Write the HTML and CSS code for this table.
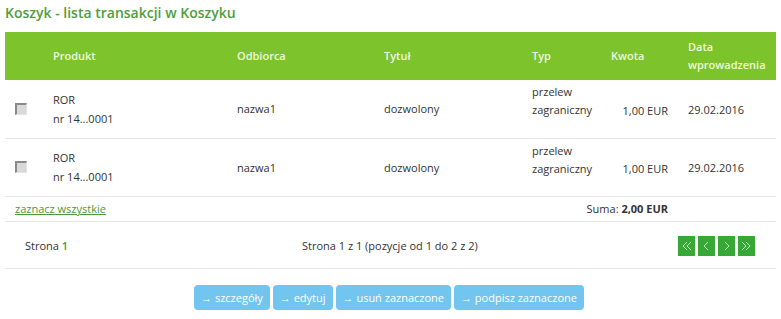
FILE: index.html
```html
<!DOCTYPE html>
<html lang="pl">
<head>
<meta charset="utf-8">
<title>Koszyk</title>
<link rel="stylesheet" href="styles.css">
</head>
<body>
<div class="page">
  <h1 class="title">Koszyk - lista transakcji w Koszyku</h1>

  <table class="grid">
    <colgroup>
      <col class="c-check"><col class="c-prod"><col class="c-odb"><col class="c-tyt"><col class="c-typ"><col class="c-kw"><col class="c-data">
    </colgroup>
    <thead>
      <tr>
        <th></th>
        <th>Produkt</th>
        <th>Odbiorca</th>
        <th>Tytuł</th>
        <th>Typ</th>
        <th>Kwota</th>
        <th>Data wprowadzenia</th>
      </tr>
    </thead>
    <tbody>
      <tr class="item">
        <td class="check"><span class="box"></span></td>
        <td>ROR<br>nr 14...0001</td>
        <td>nazwa1</td>
        <td>dozwolony</td>
        <td class="typ">przelew<br>zagraniczny</td>
        <td class="amount">1,00 EUR</td>
        <td class="date">29.02.2016</td>
      </tr>
      <tr class="item">
        <td class="check"><span class="box"></span></td>
        <td>ROR<br>nr 14...0001</td>
        <td>nazwa1</td>
        <td>dozwolony</td>
        <td class="typ">przelew<br>zagraniczny</td>
        <td class="amount">1,00 EUR</td>
        <td class="date">29.02.2016</td>
      </tr>
      <tr class="summary">
        <td colspan="4"><a href="#" class="select-all">zaznacz wszystkie</a></td>
        <td colspan="2" class="sum">Suma: <b>2,00 EUR</b></td>
        <td></td>
      </tr>
    </tbody>
  </table>

  <div class="pager">
    <div class="pager-page">Strona <span class="cur">1</span></div>
    <div class="pager-info">Strona 1 z 1 (pozycje od 1 do 2 z 2)</div>
    <div class="pager-nav">
      <a href="#" class="pg"><svg viewBox="0 0 17 20" width="17" height="20"><polyline points="9,6 5,10 9,14"/><polyline points="13,6 9,10 13,14"/></svg></a>
      <a href="#" class="pg"><svg viewBox="0 0 17 20" width="17" height="20"><polyline points="10,6 6,10 10,14"/></svg></a>
      <a href="#" class="pg"><svg viewBox="0 0 17 20" width="17" height="20"><polyline points="7,6 11,10 7,14"/></svg></a>
      <a href="#" class="pg"><svg viewBox="0 0 17 20" width="17" height="20"><polyline points="4,6 8,10 4,14"/><polyline points="8,6 12,10 8,14"/></svg></a>
    </div>
  </div>

  <div class="actions">
    <button class="btn">→ szczegóły</button>
    <button class="btn">→ edytuj</button>
    <button class="btn">→ usuń zaznaczone</button>
    <button class="btn">→ podpisz zaznaczone</button>
  </div>
</div>
</body>
</html>
```
FILE: styles.css
```css
* { box-sizing: border-box; }

body {
  margin: 0;
  background: #fff;
  font-family: "Open Sans", "Noto Sans", sans-serif;
  font-size: 11px;
  color: #333;
}

.page {
  padding: 0 5px;
}

.title {
  margin: 0;
  height: 32px;
  padding-top: 3px;
  font-size: 14px;
  font-weight: 600;
  color: #4f9e3c;
  line-height: 20px;
}

.grid {
  width: 771px;
  border-collapse: collapse;
  table-layout: fixed;
}

.c-check { width: 43px; }
.c-prod { width: 184px; }
.c-odb { width: 147px; }
.c-tyt { width: 148px; }
.c-typ { width: 79px; }
.c-kw { width: 77px; }
.c-data { width: 93px; }

.grid th {
  background: #7cc32c;
  color: #eef8dc;
  font-weight: 600;
  text-align: left;
  height: 48px;
  padding: 0 5px;
  line-height: 18px;
  vertical-align: middle;
}

.grid td {
  padding: 0 5px;
  line-height: 19px;
  vertical-align: middle;
}

.item td {
  height: 58px;
  border-bottom: 1px solid #e6e6e6;
}

.item .typ { vertical-align: top; padding-top: 3px; line-height: 18px; }
.item .amount { text-align: right; padding-right: 15px; padding-top: 3px; }
.item .date { padding-top: 1px; }

.check { padding-left: 10px !important; }

.box {
  display: block;
  width: 12px;
  height: 12px;
  background: #d9d9d9;
  border-top: 2px solid #8a8a8a;
  border-left: 2px solid #8a8a8a;
  border-right: 1px solid #e4e4e4;
  border-bottom: 1px solid #e4e4e4;
}

.summary td {
  height: 25px;
  border-bottom: 1px solid #e6e6e6;
}

.select-all {
  color: #4a9a3c;
  text-decoration: underline;
  padding-left: 5px;
}

.sum {
  text-align: right;
  padding-right: 15px !important;
  white-space: nowrap;
}

.pager {
  display: flex;
  align-items: center;
  height: 47px;
  border-bottom: 1px solid #e6e6e6;
  width: 771px;
  padding-top: 1px;
}

.pager-page {
  width: 297px;
  padding-left: 20px;
}

.cur {
  color: #3aa23a;
  font-weight: 600;
}

.pager-info {
  flex: 1;
}

.pager-nav {
  display: flex;
  gap: 3px;
  padding-right: 21px;
  padding-top: 2px;
}

.pg {
  display: block;
  width: 17px;
  height: 20px;
  background: #37a836;
}

.pg svg {
  display: block;
  fill: none;
  stroke: #cdebc9;
  stroke-width: 0.9;
}

.actions {
  display: flex;
  justify-content: center;
  gap: 3px;
  width: 771px;
  padding-top: 16px;
  padding-right: 3px;
}

.btn {
  font-family: inherit;
  font-size: 11px;
  color: #fff;
  background: #72c5ee;
  border: 0;
  border-radius: 4px;
  height: 25px;
  padding: 0 7px;
  line-height: 25px;
}
```
